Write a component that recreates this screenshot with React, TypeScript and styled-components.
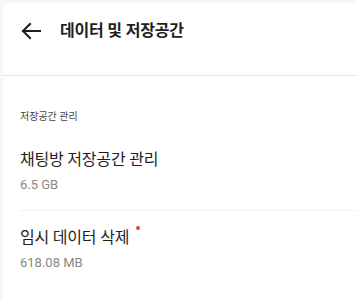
import React from 'react'
import styled, { createGlobalStyle } from 'styled-components'

const GlobalStyle = createGlobalStyle`
  html, body {
    margin: 0;
    padding: 0;
    background: #f7f7f7;
    font-family: Roboto, "Noto Sans CJK KR", sans-serif;
  }
`

const Panel = styled.div`
  margin: 3px 0 0 3px;
  min-height: 298px;
  background: #fff;
  border-top-left-radius: 8px;
`

const Header = styled.header`
  display: flex;
  align-items: flex-start;
  height: 55px;
  padding: 17px 0 0 17px;
  border-bottom: 1px solid #e2e2e2;
`

const BackButton = styled.button`
  display: flex;
  align-items: center;
  justify-content: center;
  width: 22px;
  height: 22px;
  padding: 0;
  margin-right: 18px;
  border: none;
  background: none;
  color: #1e1e1e;
`

const Title = styled.h1`
  margin: 0;
  font-size: 16px;
  line-height: 22px;
  font-weight: 700;
  color: #1e1e1e;
  letter-spacing: -0.2px;
`

const Section = styled.section`
  padding: 34px 0 0 17px;
`

const SectionLabel = styled.div`
  font-size: 10px;
  color: #444;
  line-height: 14px;
  margin-bottom: 9px;
`

const Item = styled.div<{ $last?: boolean }>`
  padding: 16px 0 16px;
  border-bottom: ${p => (p.$last ? 'none' : '1px solid #f0f0f0')};
`

const ItemTitle = styled.div`
  position: relative;
  display: inline-block;
  font-size: 16px;
  color: #1e1e1e;
  line-height: 22px;
  letter-spacing: -0.2px;
`

const Dot = styled.span`
  position: absolute;
  top: -1px;
  right: -11px;
  width: 4px;
  height: 4px;
  border-radius: 50%;
  background: #e04444;
`

const ItemSub = styled.div`
  margin-top: 5px;
  font-size: 13px;
  color: #888;
  line-height: 18px;
`

export default function App() {
  return (
    <>
      <GlobalStyle />
      <Panel>
        <Header>
          <BackButton aria-label="back">
            <svg width="22" height="22" viewBox="0 0 22 22" fill="none" stroke="currentColor" strokeWidth="2" strokeLinecap="square">
              <path d="M3 11h17" />
              <path d="M10 4l-7 7 7 7" />
            </svg>
          </BackButton>
          <Title>데이터 및 저장공간</Title>
        </Header>
        <Section>
          <SectionLabel>저장공간 관리</SectionLabel>
          <Item>
            <ItemTitle>채팅방 저장공간 관리</ItemTitle>
            <ItemSub>6.5 GB</ItemSub>
          </Item>
          <Item $last>
            <ItemTitle>
              임시 데이터 삭제
              <Dot />
            </ItemTitle>
            <ItemSub>618.08 MB</ItemSub>
          </Item>
        </Section>
      </Panel>
    </>
  )
}
